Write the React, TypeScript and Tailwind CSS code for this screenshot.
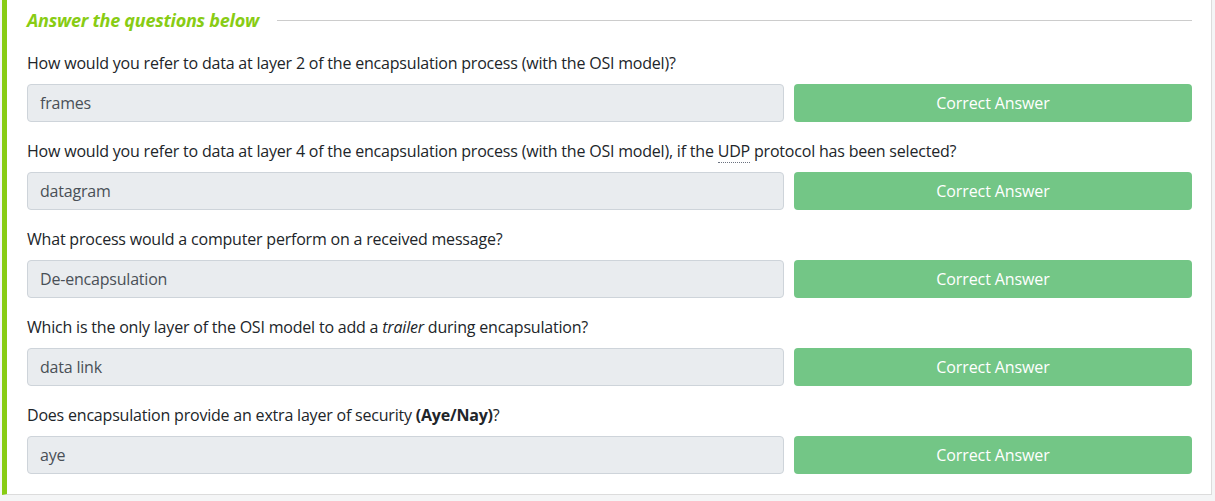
import React from 'react';

type Row = {
  question: React.ReactNode;
  answer: string;
};

const rows: Row[] = [
  {
    question: 'How would you refer to data at layer 2 of the encapsulation process (with the OSI model)?',
    answer: 'frames',
  },
  {
    question: (
      <>
        How would you refer to data at layer 4 of the encapsulation process (with the OSI model), if the{' '}
        <abbr className="no-underline border-b border-dotted border-[#6b7280]" title="User Datagram Protocol">UDP</abbr>{' '}
        protocol has been selected?
      </>
    ),
    answer: 'datagram',
  },
  {
    question: 'What process would a computer perform on a received message?',
    answer: 'De-encapsulation',
  },
  {
    question: (
      <>
        Which is the only layer of the OSI model to add a <em>trailer</em> during encapsulation?
      </>
    ),
    answer: 'data link',
  },
  {
    question: (
      <>
        Does encapsulation provide an extra layer of security <strong className="font-bold">(Aye/Nay)</strong>?
      </>
    ),
    answer: 'aye',
  },
];

export default function App() {
  return (
    <div className="w-[1215px] h-[501px] overflow-hidden bg-[#f4f5f6] font-['Open_Sans','Noto_Sans',sans-serif]">
      <div className="ml-[2px] mr-[3px] -mt-[40px] bg-white border border-[#dcdcdc] border-l-[5px] border-l-[#88cc14] pl-[20px] pr-[19px] pt-[46px] pb-[20px]">
        <div className="flex items-center gap-[18px] h-[26px]">
          <h3 className="text-[18px] font-bold italic text-[#88cc14] leading-[26px] whitespace-nowrap tracking-[-0.25px]">
            Answer the questions below
          </h3>
          <div className="flex-1 h-px bg-[#cccccc] mt-[1px]" />
        </div>

        <div className="mt-[18px] flex flex-col gap-[17px]">
          {rows.map((row, i) => (
            <div key={i}>
              <p className="text-[16px] leading-[24px] text-[#212529] tracking-[-0.2px]">{row.question}</p>
              <div className="mt-[9px] flex gap-[10px]">
                <div className="w-[757px] h-[38px] flex items-center px-[12px] bg-[#e9ecef] border border-[#ced4da] rounded-[4px] text-[16px] text-[#495057] tracking-[-0.2px]">
                  {row.answer}
                </div>
                <button className="flex-1 h-[38px] rounded-[4px] bg-[#73c686] text-white text-[16px] font-medium tracking-[-0.1px]">
                  Correct Answer
                </button>
              </div>
            </div>
          ))}
        </div>
      </div>
    </div>
  );
}
